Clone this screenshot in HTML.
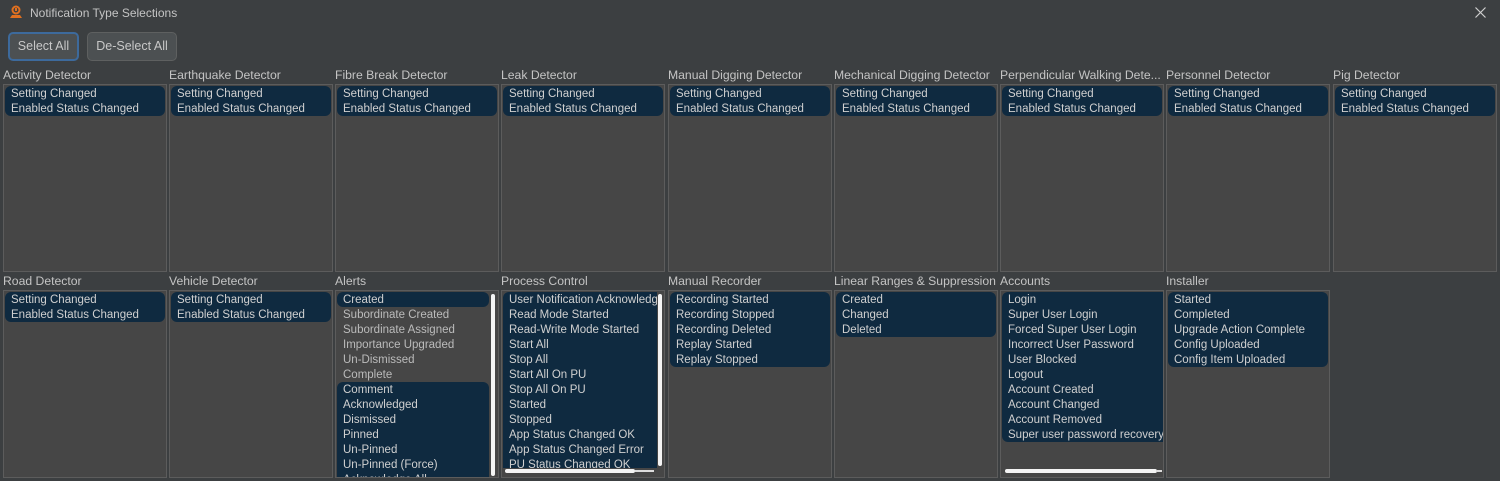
<!DOCTYPE html>
<html><head><meta charset="utf-8"><style>
*{box-sizing:border-box;margin:0;padding:0}
body{width:1500px;height:481px;background:#3c3f41;font-family:"Liberation Sans",sans-serif;font-size:11.5px;color:#bbbbbb;position:relative;overflow:hidden}
.a{position:absolute}
.title{left:30px;top:6px;font-size:12px;color:#c4c4c4}
.btn{top:32px;height:29px;border:1px solid #5e6060;border-radius:5px;background:#4c5052;color:#c8c8c8;font-size:12.5px;line-height:27px;text-align:center}
.lbl{font-size:12.2px;color:#c4c4c4;white-space:nowrap;width:166px;overflow:hidden}
.p{width:164px;height:188px;border:1px solid #5c5c5c;background:#464646;overflow:hidden}
.p>.g:first-child,.p>.u:first-child{margin-top:0}
.in{padding-top:1px}
.g{margin:0 1px;background:#0f2a40;border-radius:6px;color:#d0d0d0}
.g.sq{border-radius:6px 0 0 6px;margin-right:0}
.i{height:15px;line-height:17px;padding-left:6px;white-space:nowrap}
.u{margin:0 1px}
.vs{width:4px;background:#f4f4f4;border-radius:2px}
.hs{height:4px;background:#f4f4f4;border-radius:2px}
</style></head><body>
<svg class="a" style="left:9px;top:5px" width="14" height="14" viewBox="0 0 14 14"><circle cx="7" cy="5" r="3.5" fill="none" stroke="#e07020" stroke-width="2"/><rect x="6" y="3" width="2" height="3" fill="#e07020"/><path d="M1 13 L3 10 H11 L13 13 Z" fill="#e07020"/></svg>
<div class="a title">Notification Type Selections</div>
<svg class="a" style="left:1475px;top:7px" width="11" height="11" viewBox="0 0 11 11"><path d="M0.5 0.5 L10.5 10.5 M10.5 0.5 L0.5 10.5" stroke="#cfcfcf" stroke-width="1.2"/></svg>
<div class="a btn" style="left:8px;width:71px;border:2px solid #3d6a9c;line-height:25px">Select All</div>
<div class="a btn" style="left:87px;width:90px">De-Select All</div>

<div class="a lbl" style="left:3px;top:68px">Activity Detector</div>
<div class="a lbl" style="left:169px;top:68px">Earthquake Detector</div>
<div class="a lbl" style="left:335px;top:68px">Fibre Break Detector</div>
<div class="a lbl" style="left:501px;top:68px">Leak Detector</div>
<div class="a lbl" style="left:668px;top:68px">Manual Digging Detector</div>
<div class="a lbl" style="left:834px;top:68px">Mechanical Digging Detector</div>
<div class="a lbl" style="left:1000px;top:68px">Perpendicular Walking Dete...</div>
<div class="a lbl" style="left:1166px;top:68px">Personnel Detector</div>
<div class="a lbl" style="left:1333px;top:68px">Pig Detector</div>

<div class="a p in" style="left:3px;top:84px"><div class="g"><div class="i">Setting Changed</div><div class="i">Enabled Status Changed</div></div></div>
<div class="a p in" style="left:169px;top:84px"><div class="g"><div class="i">Setting Changed</div><div class="i">Enabled Status Changed</div></div></div>
<div class="a p in" style="left:335px;top:84px"><div class="g"><div class="i">Setting Changed</div><div class="i">Enabled Status Changed</div></div></div>
<div class="a p in" style="left:501px;top:84px"><div class="g"><div class="i">Setting Changed</div><div class="i">Enabled Status Changed</div></div></div>
<div class="a p in" style="left:668px;top:84px"><div class="g"><div class="i">Setting Changed</div><div class="i">Enabled Status Changed</div></div></div>
<div class="a p in" style="left:834px;top:84px"><div class="g"><div class="i">Setting Changed</div><div class="i">Enabled Status Changed</div></div></div>
<div class="a p in" style="left:1000px;top:84px"><div class="g"><div class="i">Setting Changed</div><div class="i">Enabled Status Changed</div></div></div>
<div class="a p in" style="left:1166px;top:84px"><div class="g"><div class="i">Setting Changed</div><div class="i">Enabled Status Changed</div></div></div>
<div class="a p in" style="left:1333px;top:84px"><div class="g"><div class="i">Setting Changed</div><div class="i">Enabled Status Changed</div></div></div>

<div class="a lbl" style="left:3px;top:274px">Road Detector</div>
<div class="a lbl" style="left:169px;top:274px">Vehicle Detector</div>
<div class="a lbl" style="left:335px;top:274px">Alerts</div>
<div class="a lbl" style="left:501px;top:274px">Process Control</div>
<div class="a lbl" style="left:668px;top:274px">Manual Recorder</div>
<div class="a lbl" style="left:834px;top:274px">Linear Ranges &amp; Suppression</div>
<div class="a lbl" style="left:1000px;top:274px">Accounts</div>
<div class="a lbl" style="left:1166px;top:274px">Installer</div>

<div class="a p in" style="left:3px;top:290px"><div class="g"><div class="i">Setting Changed</div><div class="i">Enabled Status Changed</div></div></div>
<div class="a p in" style="left:169px;top:290px"><div class="g"><div class="i">Setting Changed</div><div class="i">Enabled Status Changed</div></div></div>
<div class="a p in" style="left:335px;top:290px">
<div class="g" style="width:152px"><div class="i">Created</div></div>
<div class="u"><div class="i">Subordinate Created</div><div class="i">Subordinate Assigned</div><div class="i">Importance Upgraded</div><div class="i">Un-Dismissed</div><div class="i">Complete</div></div>
<div class="g" style="width:152px;border-radius:6px 6px 0 0"><div class="i">Comment</div><div class="i">Acknowledged</div><div class="i">Dismissed</div><div class="i">Pinned</div><div class="i">Un-Pinned</div><div class="i">Un-Pinned (Force)</div><div class="i">Acknowledge All</div></div>
<div class="a vs" style="left:155px;top:3px;height:182px"></div>
</div>
<div class="a p in" style="left:501px;top:290px">
<div class="g" style="width:154px;border-radius:6px 0 0 0;height:176px;overflow:hidden"><div class="i">User Notification Acknowledged</div><div class="i">Read Mode Started</div><div class="i">Read-Write Mode Started</div><div class="i">Start All</div><div class="i">Stop All</div><div class="i">Start All On PU</div><div class="i">Stop All On PU</div><div class="i">Started</div><div class="i">Stopped</div><div class="i">App Status Changed OK</div><div class="i">App Status Changed Error</div><div class="i">PU Status Changed OK</div></div>
<div class="a vs" style="left:156px;top:3px;height:172px"></div>
<div class="a hs" style="left:3px;top:178px;width:130px"></div>
<div class="a" style="left:133px;top:179px;width:19px;height:2px;background:#ddd"></div>
</div>
<div class="a p in" style="left:668px;top:290px"><div class="g"><div class="i">Recording Started</div><div class="i">Recording Stopped</div><div class="i">Recording Deleted</div><div class="i">Replay Started</div><div class="i">Replay Stopped</div></div></div>
<div class="a p in" style="left:834px;top:290px"><div class="g"><div class="i">Created</div><div class="i">Changed</div><div class="i">Deleted</div></div></div>
<div class="a p in" style="left:1000px;top:290px">
<div class="g sq"><div class="i">Login</div><div class="i">Super User Login</div><div class="i">Forced Super User Login</div><div class="i">Incorrect User Password</div><div class="i">User Blocked</div><div class="i">Logout</div><div class="i">Account Created</div><div class="i">Account Changed</div><div class="i">Account Removed</div><div class="i">Super user password recovery</div></div>
<div class="a hs" style="left:4px;top:178px;width:152px"></div>
<div class="a" style="left:155px;top:179px;width:6px;height:2px;background:#ddd"></div>
</div>
<div class="a p in" style="left:1166px;top:290px"><div class="g"><div class="i">Started</div><div class="i">Completed</div><div class="i">Upgrade Action Complete</div><div class="i">Config Uploaded</div><div class="i">Config Item Uploaded</div></div></div>
</body></html>
